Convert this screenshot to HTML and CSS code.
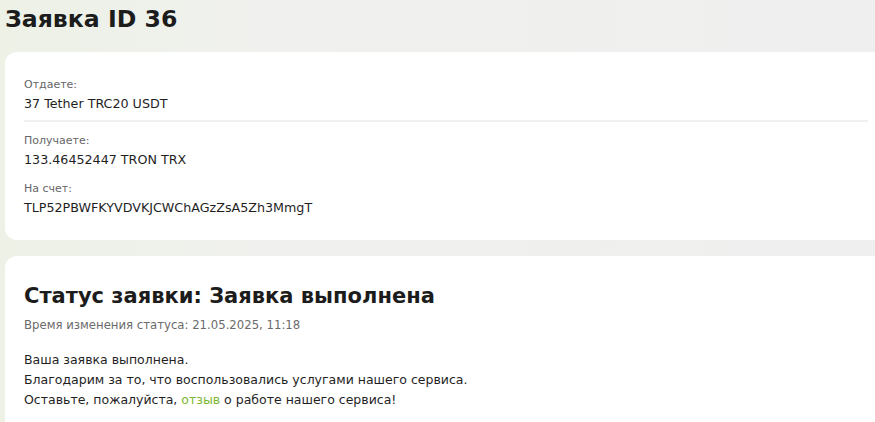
FILE: index.html
```html
<!DOCTYPE html>
<html lang="ru">
<head>
<meta charset="utf-8">
<title>Заявка ID 36</title>
<link rel="stylesheet" href="styles.css">
</head>
<body>
<div class="page">
  <h1 class="title">Заявка ID 36</h1>
  <div class="card info">
    <div class="row row-first">
      <div class="label">Отдаете:</div>
      <div class="value">37 Tether TRC20 USDT</div>
    </div>
    <div class="divider"></div>
    <div class="row">
      <div class="label">Получаете:</div>
      <div class="value">133.46452447 TRON TRX</div>
    </div>
    <div class="row">
      <div class="label">На счет:</div>
      <div class="value">TLP52PBWFKYVDVKJCWChAGzZsA5Zh3MmgT</div>
    </div>
  </div>
  <div class="card status">
    <h2 class="status-title">Статус заявки: Заявка выполнена</h2>
    <div class="status-time">Время изменения статуса: 21.05.2025, 11:18</div>
    <p class="status-text">Ваша заявка выполнена.<br>Благодарим за то, что воспользовались услугами нашего сервиса.<br>Оставьте, пожалуйста, <a class="link" href="#">отзыв</a> о работе нашего сервиса!</p>
  </div>
</div>
</body>
</html>
```
FILE: styles.css
```css
html, body {
  margin: 0;
  padding: 0;
  height: 100%;
  overflow: hidden;
}
body {
  background: linear-gradient(90deg, #edf1e6 0%, #f0f1ee 30%, #efefef 100%);
  font-family: "DejaVu Sans", sans-serif;
  color: #1f1f1f;
}
.page {
  width: 882px;
  padding: 0 0 0 5px;
  display: flex;
  flex-direction: column;
}
.title {
  margin: 0;
  height: 52px;
  padding-top: 4px;
  box-sizing: border-box;
  font-size: 23.6px;
  font-weight: bold;
  line-height: 30px;
  color: #1c1c1c;
}
.card {
  background: #fff;
  border-radius: 12px;
  padding: 0 19px;
}
.info {
  height: 188px;
  box-sizing: border-box;
  padding-top: 26px;
  display: flex;
  flex-direction: column;
}
.row {
  display: flex;
  flex-direction: column;
  gap: 3px;
  margin-bottom: 14px;
}
.row-first {
  margin-bottom: 8px;
}
.label {
  font-size: 11px;
  line-height: 14px;
  color: #666;
}
.value {
  font-size: 12.7px;
  line-height: 17px;
  color: #1f1f1f;
}
.divider {
  height: 2px;
  background: #f0f0f0;
  margin: 0 0 12px 0;
}
.status {
  margin-top: 16px;
  padding-top: 27px;
  height: 200px;
}
.status-title {
  margin: 0;
  font-size: 21px;
  line-height: 26px;
  font-weight: bold;
  color: #1c1c1c;
}
.status-time {
  margin-top: 7px;
  font-size: 11.7px;
  line-height: 18px;
  color: #6b6b6b;
}
.status-text {
  margin: 16px 0 0;
  font-size: 12.5px;
  line-height: 20px;
  color: #1f1f1f;
}
.link {
  color: #7cb82f;
  text-decoration: none;
}
```
